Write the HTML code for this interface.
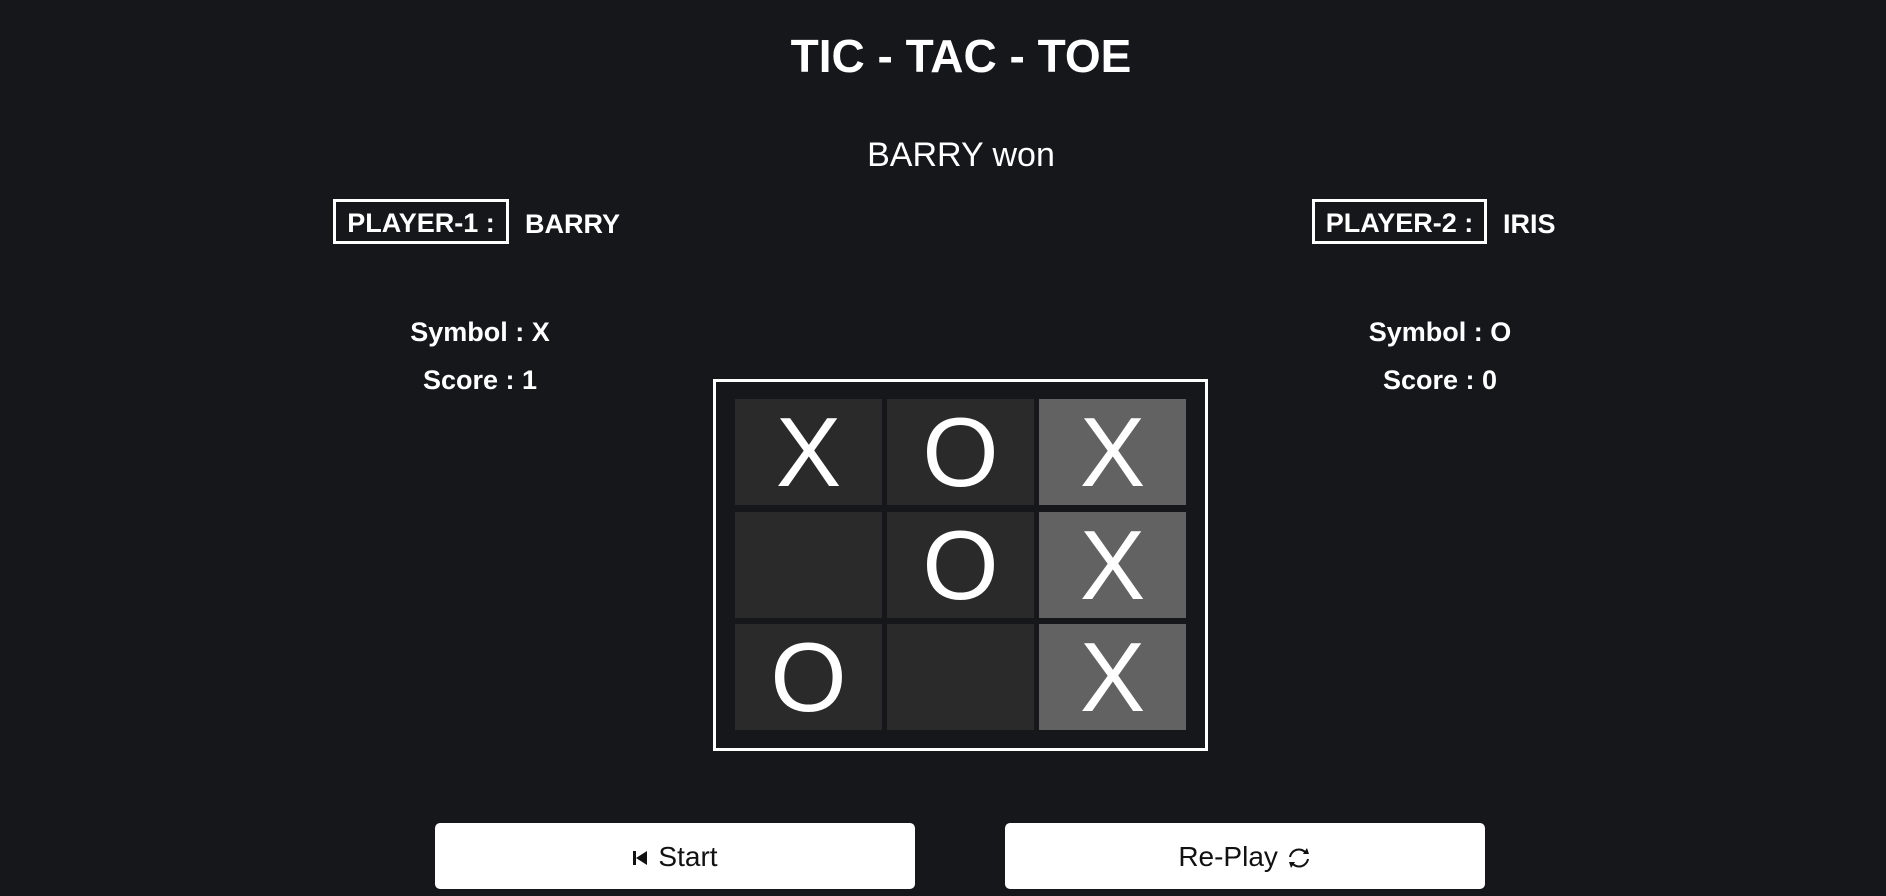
<!DOCTYPE html>
<html><head><meta charset="utf-8"><style>
body{margin:0;width:1886px;height:896px;background:#16171b;color:#fff;font-family:"Liberation Sans",sans-serif;position:relative;overflow:hidden}
.a{position:absolute;white-space:nowrap}
h1{position:absolute;left:18px;width:1886px;top:23px;margin:0;text-align:center;font-size:46px;font-weight:bold;line-height:66px}
.won{left:18px;width:1886px;text-align:center;top:134px;font-size:34px;line-height:42px}
.pbox{border:3px solid #fff;height:39px;top:199px;font-size:27px;font-weight:bold;line-height:42px;text-align:center;box-sizing:content-box}
.b{font-size:27px;font-weight:bold}
.c{text-align:center;width:300px}
.board{left:713px;top:379px;width:495px;height:372px;border:3px solid #fff;box-sizing:border-box}
.cell{position:absolute;width:147px;height:106px;background:#2a2a2a;font-size:98px;line-height:106px;text-align:center}
.w{background:#626262}
.btn{position:absolute;top:823px;height:66px;width:480px;background:#fff;border-radius:5px;color:#111;font-size:28px;line-height:68px;text-align:center}
</style></head><body>
<h1>TIC - TAC - TOE</h1>
<div class="a won">BARRY won</div>
<div class="a pbox" style="left:333px;width:170px">PLAYER-1 :</div>
<div class="a b" style="left:525px;top:209px">BARRY</div>
<div class="a pbox" style="left:1312px;width:169px">PLAYER-2 :</div>
<div class="a b" style="left:1503px;top:209px">IRIS</div>
<div class="a b c" style="left:330px;top:317px">Symbol : X</div>
<div class="a b c" style="left:330px;top:365px">Score : 1</div>
<div class="a b c" style="left:1290px;top:317px">Symbol : O</div>
<div class="a b c" style="left:1290px;top:365px">Score : 0</div>
<div class="a board"></div>
<div class="cell" style="left:735px;top:399px">X</div>
<div class="cell" style="left:887px;top:399px">O</div>
<div class="cell w" style="left:1039px;top:399px">X</div>
<div class="cell" style="left:735px;top:512px"></div>
<div class="cell" style="left:887px;top:512px">O</div>
<div class="cell w" style="left:1039px;top:512px">X</div>
<div class="cell" style="left:735px;top:624px">O</div>
<div class="cell" style="left:887px;top:624px"></div>
<div class="cell w" style="left:1039px;top:624px">X</div>
<div class="btn" style="left:435px"><svg width="16" height="18" viewBox="0 0 16 18" style="vertical-align:-1px;margin-right:10px"><rect x="1" y="2" width="3" height="14" fill="#111"/><path d="M15 2 L4 9 L15 16Z" fill="#111"/></svg>Start</div>
<div class="btn" style="left:1005px">Re-Play <svg width="26" height="26" viewBox="0 0 26 26" style="vertical-align:-5px"><path d="M4 12 A9 9 0 0 1 20 8" fill="none" stroke="#111" stroke-width="2"/><path d="M22 14 A9 9 0 0 1 6 18" fill="none" stroke="#111" stroke-width="2"/><path d="M17 9 L23 9 L21 3Z" fill="#111"/><path d="M9 17 L3 17 L5 23Z" fill="#111"/></svg></div>
</body></html>
